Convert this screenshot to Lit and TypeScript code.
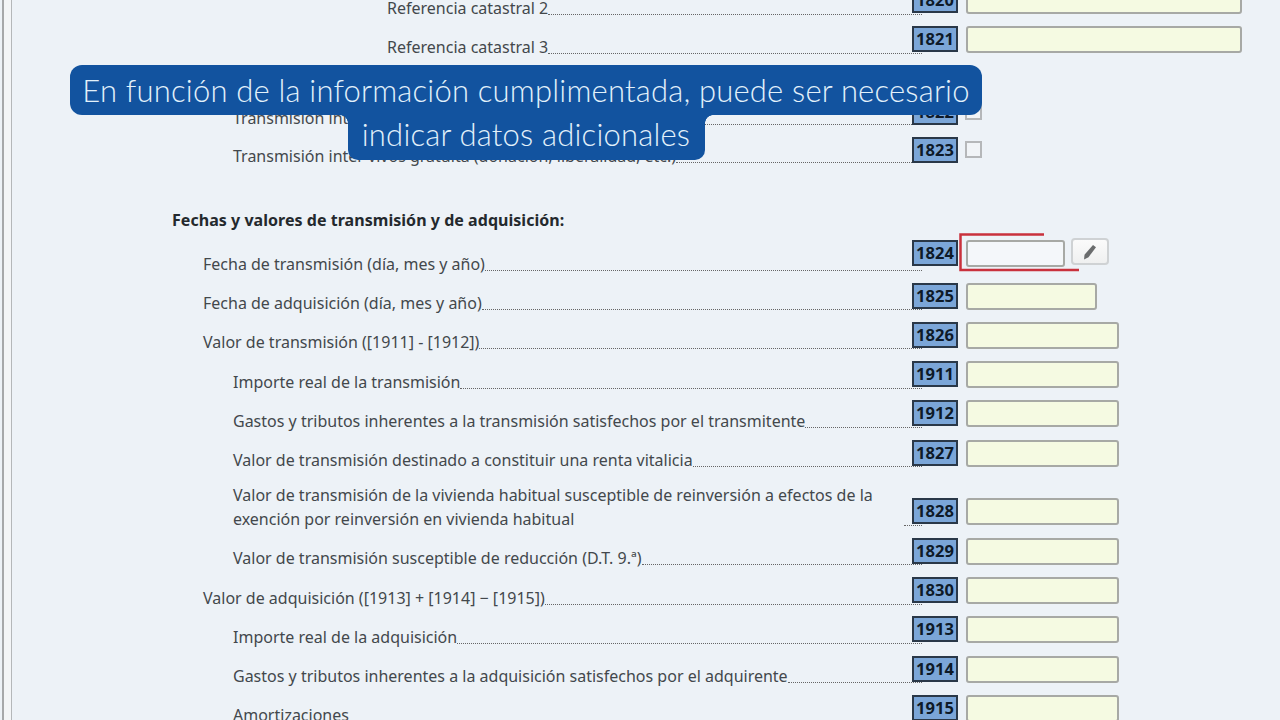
import { LitElement, html, css } from "lit";
import { customElement } from "lit/decorators.js";

type Row = { label?: string; code?: string; kind?: string; indent?: number; h: number; width?: number; fit?: string; };

const rows: Row[] = [
  { label: "Referencia catastral 2", code: "1820", indent: 2, h: 39, width: 276, fit: "up" },
  { label: "Referencia catastral 3", code: "1821", indent: 2, h: 39, width: 276, fit: "up" },
  { h: 33 },
  { label: "Transmisión inter vivos onerosa (compraventa, permuta, etc.)", code: "1822", indent: 1, kind: "check", h: 38, fit: "low" },
  { label: "Transmisión inter vivos gratuita (donación, liberalidad, etc.)", code: "1823", indent: 1, kind: "check", h: 38, fit: "low" },
];
const rows2: Row[] = [
  { label: "Fecha de transmisión (día, mes y año)", code: "1824", indent: 0, kind: "focus", h: 39, width: 99, fit: "raised" },
  { label: "Fecha de adquisición (día, mes y año)", code: "1825", indent: 0, h: 39, width: 131, fit: "mid" },
  { label: "Valor de transmisión ([1911] - [1912])", code: "1826", indent: 0, h: 39, width: 153, fit: "mid" },
  { label: "Importe real de la transmisión", code: "1911", indent: 1, h: 40, width: 153, fit: "up" },
  { label: "Gastos y tributos inherentes a la transmisión satisfechos por el transmitente", code: "1912", indent: 1, h: 39, width: 153, fit: "up" },
  { label: "Valor de transmisión destinado a constituir una renta vitalicia", code: "1827", indent: 1, h: 39, width: 153, fit: "mid" },
  { label: "Valor de transmisión de la vivienda habitual susceptible de reinversión a efectos de la exención por reinversión en vivienda habitual", code: "1828", indent: 1, h: 59, width: 153, fit: "up" },
  { label: "Valor de transmisión susceptible de reducción (D.T. 9.ª)", code: "1829", indent: 1, h: 39, width: 153, fit: "mid" },
  { label: "Valor de adquisición ([1913] + [1914] − [1915])", code: "1830", indent: 0, h: 40, width: 153, fit: "up" },
  { label: "Importe real de la adquisición", code: "1913", indent: 1, h: 39, width: 153, fit: "up" },
  { label: "Gastos y tributos inherentes a la adquisición satisfechos por el adquirente", code: "1914", indent: 1, h: 39, width: 153, fit: "mid" },
  { label: "Amortizaciones", code: "1915", indent: 1, h: 39, width: 153, fit: "mid" },
];

@customElement("app-root")
export class AppRoot extends LitElement {
  static styles = css`
    :host { display: block; position: relative; width: 1280px; height: 720px; overflow: hidden; background: #edf2f7; font-family: "Noto Sans", sans-serif; color: #43484c; }
    .rail { position: absolute; left: 2px; top: 0; bottom: 0; width: 7px; background: #f3f5f7; border-left: 2px solid #a6a8aa; border-right: 1px solid #b4b7b9; }
    .sheet { margin-top: -13px; padding-left: 172px; width: 1070px; }
    .row { display: flex; align-items: flex-end; box-sizing: border-box; }
    .left { width: 750px; margin-right: -10px; display: flex; flex-direction: column; }
    .row.up { padding-bottom: 13px; } .row.up .left { margin-bottom: -7px; }
    .row.mid { padding-bottom: 12px; } .row.mid .left { margin-bottom: -6px; }
    .row.low { padding-bottom: 11px; } .row.low .left { margin-bottom: -5px; }
    .row.raised { padding-bottom: 16px; } .row.raised .left { margin-bottom: -10px; }
    .label { flex: 1; min-width: 0; display: flex; align-items: flex-end; font-size: 16px; line-height: 24px; }
    .i0 { padding-left: 31px; } .i1 { padding-left: 61px; } .i2 { padding-left: 215px; }
    .label span { flex: none; }
    .label.two span { flex: 1; }
    .label i { flex: 1; border-bottom: 1px dotted #666; margin-bottom: 5px; }
    .label.two i { flex: none; width: 18px; }
    .code { flex: none; box-sizing: border-box; width: 46px; height: 26px; background: #7ba6d8; border: 2px solid #2a3848; color: #0e1a28; font-weight: 700; font-size: 16.5px; line-height: 22px; text-align: center; }
    .field { flex: none; margin-left: 8px; display: flex; align-items: flex-start; gap: 6px; }
    .input { box-sizing: border-box; height: 27px; margin-bottom: -1px; background: #f5fae2; border: 2px solid #a7a9a5; border-radius: 3px; }
    .check { box-sizing: border-box; width: 17px; height: 17px; margin-left: -1px; background: #f1f4f7; border: 2px solid #b5b7b9; margin-bottom: 5px; }
    .white { background: #f4f7fa; }
    .btn { box-sizing: border-box; width: 38px; height: 27px; margin-top: -2px; border: 2px solid #cfd2d4; border-radius: 4px; background: linear-gradient(#fbfbfb, #eff0f0); display: flex; align-items: center; justify-content: center; }
    .focus { position: relative; }
    .mark { position: absolute; left: -7px; top: -7px; width: 120px; height: 40px; pointer-events: none; }
    h3 { margin: 0; height: 35px; padding-top: 34px; font-size: 16px; line-height: 24px; font-weight: 700; color: #24292d; letter-spacing: 0.04px; }
    .caption { position: absolute; left: 70px; top: 65px; width: 912px; text-align: center; color: #e2f1fb; font-family: Lato, sans-serif; font-weight: 300; font-size: 31px; letter-spacing: 0.19px; }
    .caption div { background: #12539f; position: relative; margin: 0 auto; }
    .c1 { width: 912px; height: 50px; line-height: 51px; border-radius: 12px; }
    .c2 { width: 357px; height: 45px; line-height: 38px; border-radius: 0 0 10px 10px; }
    .c2::before, .c2::after { content: ""; position: absolute; top: 0; width: 8px; height: 8px; }
    .c2::before { right: 100%; background: radial-gradient(circle at 0 100%, transparent 7.5px, #12539f 8px); }
    .c2::after { left: 100%; background: radial-gradient(circle at 100% 100%, transparent 7.5px, #12539f 8px); }
  `;
  renderRow(r: Row) {
    if (!r.label) return html`<div style="height:${r.h}px"></div>`;
    const two = r.label.length > 100;
    return html`<div class="row ${r.fit}" style="height:${r.h}px">
      <div class="left"><div class="label i${r.indent} ${two ? "two" : ""}"><span>${r.label}</span><i></i></div></div>
      <div class="code">${r.code}</div>
      <div class="field">
        ${r.kind === "check" ? html`<div class="check"></div>` : r.kind === "focus" ? html`
          <div class="focus"><div class="input white" style="width:${r.width}px"></div>
            <svg class="mark" viewBox="0 0 120 40" fill="none" stroke="#c9313c" stroke-width="2.5"><path d="M85 1.500H1.500V37H120"/></svg></div>
          <div class="btn"><svg width="16" height="16" viewBox="0 0 16 16"><path d="M11 1l3 2.200-7.500 10-4.500 2.300.5-4.800z" fill="#6a6c6d"/></svg></div>`
        : html`<div class="input" style="width:${r.width}px"></div>`}
      </div>
    </div>`;
  }
  render() {
    return html`<div class="rail"></div>
      <div class="sheet">
        ${rows.map((r) => this.renderRow(r))}
        <h3>Fechas y valores de transmisión y de adquisición:</h3>
        ${rows2.map((r) => this.renderRow(r))}
      </div>
      <div class="caption"><div class="c1">En función de la información cumplimentada, puede ser necesario</div><div class="c2">indicar datos adicionales</div></div>`;
  }
}
